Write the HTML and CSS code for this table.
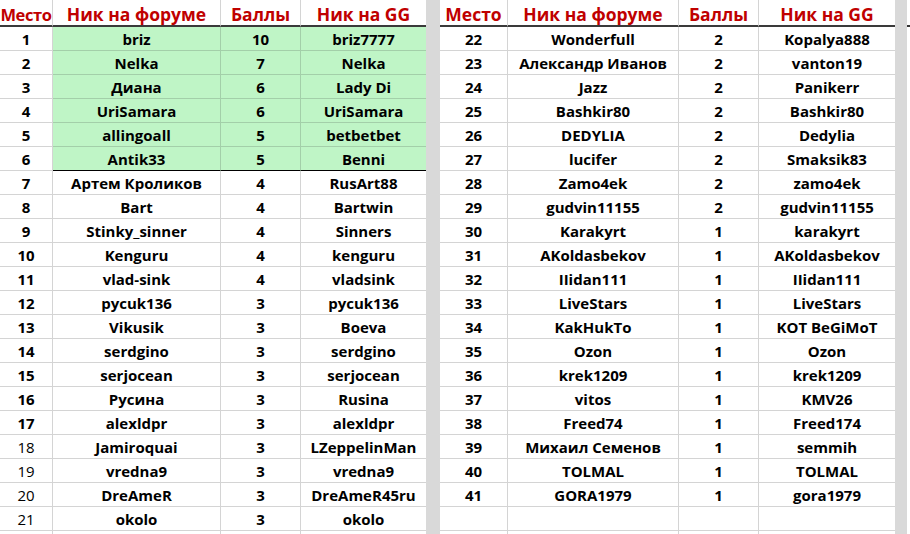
FILE: index.html
```html
<!DOCTYPE html>
<html lang="ru">
<head>
<meta charset="utf-8">
<link rel="stylesheet" href="styles.css">
</head>
<body>
<div class="sheet">
  <div class="tbl tbl-left" id="left"></div>
  <div class="gap gap-mid"></div>
  <div class="tbl tbl-right" id="right"></div>
  <div class="gap gap-end"></div>
  <div class="stub"><div class="stub-head"></div></div>
</div>
<script src="app.js"></script>
</body>
</html>
```
FILE: app.js
```js
const left = [
  [1,"briz",10,"briz7777"],[2,"Nelka",7,"Nelka"],[3,"Диана",6,"Lady Di"],
  [4,"UriSamara",6,"UriSamara"],[5,"allingoall",5,"betbetbet"],[6,"Antik33",5,"Benni"],
  [7,"Артем Кроликов",4,"RusArt88"],[8,"Bart",4,"Bartwin"],[9,"Stinky_sinner",4,"Sinners"],
  [10,"Kenguru",4,"kenguru"],[11,"vlad-sink",4,"vladsink"],[12,"pycuk136",3,"pycuk136"],
  [13,"Vikusik",3,"Boeva"],[14,"serdgino",3,"serdgino"],[15,"serjocean",3,"serjocean"],
  [16,"Русина",3,"Rusina"],[17,"alexldpr",3,"alexldpr"],[18,"Jamiroquai",3,"LZeppelinMan"],
  [19,"vredna9",3,"vredna9"],[20,"DreAmeR",3,"DreAmeR45ru"],[21,"okolo",3,"okolo"]
];
const right = [
  [22,"Wonderfull",2,"Kopalya888"],[23,"Александр Иванов",2,"vanton19"],[24,"Jazz",2,"Panikerr"],
  [25,"Bashkir80",2,"Bashkir80"],[26,"DEDYLIA",2,"Dedylia"],[27,"lucifer",2,"Smaksik83"],
  [28,"Zamo4ek",2,"zamo4ek"],[29,"gudvin11155",2,"gudvin11155"],[30,"Karakyrt",1,"karakyrt"],
  [31,"AKoldasbekov",1,"AKoldasbekov"],[32,"IIidan111",1,"IIidan111"],[33,"LiveStars",1,"LiveStars"],
  [34,"KakHukTo",1,"KOT BeGiMoT"],[35,"Ozon",1,"Ozon"],[36,"krek1209",1,"krek1209"],
  [37,"vitos",1,"KMV26"],[38,"Freed74",1,"Freed174"],[39,"Михаил Семенов",1,"semmih"],
  [40,"TOLMAL",1,"TOLMAL"],[41,"GORA1979",1,"gora1979"],["","","",""],["","","",""]
];
left.push(["","","",""]);
const heads = ["Место","Ник на форуме","Баллы","Ник на GG"];

function build(el, rows, isLeft) {
  let html = "";
  heads.forEach((h, i) => {
    let cls = "c head";
    if (i === 0) cls += " h0";
    if (i === 3) cls += " last";
    html += `<div class="${cls}">${h}</div>`;
  });
  rows.forEach((r, ri) => {
    const green = isLeft && ri < 6;
    const edge = isLeft && ri === 5;
    const thinNum = isLeft && r[0] >= 18;
    r.forEach((v, i) => {
      let cls = "c";
      if (i === 3) cls += " last";
      if (green && i > 0) cls += " green";
      if (edge && i > 0) cls += " edge";
      if (i === 0 && thinNum) cls += " thin";
      html += `<div class="${cls}">${v}</div>`;
    });
  });
  el.innerHTML = html;
}
build(document.getElementById("left"), left, true);
build(document.getElementById("right"), right, false);
```
FILE: styles.css
```css
html, body {
  margin: 0;
  padding: 0;
  background: #fff;
  width: 910px;
  height: 534px;
  overflow: hidden;
}
.sheet {
  display: flex;
  align-items: flex-start;
  height: 534px;
  overflow: hidden;
  font-family: "Open Sans", "Liberation Sans", sans-serif;
}
.tbl {
  display: grid;
  flex: none;
}
.tbl-left {
  width: 426px;
  grid-template-columns: 53px 168px 80px 125px;
}
.tbl-right {
  width: 455px;
  grid-template-columns: 68px 171px 80px 136px;
}
.gap {
  flex: none;
  align-self: stretch;
  background: #d9d9d9;
}
.gap-mid { width: 14px; }
.gap-end { width: 12px; }
.stub { flex: 1; }
.stub-head {
  height: 27px;
  box-sizing: border-box;
  border-bottom: 2px solid #333;
}
.c {
  box-sizing: border-box;
  height: 24px;
  border-bottom: 1px solid #d4d4d4;
  border-right: 1px solid #d4d4d4;
  display: flex;
  align-items: center;
  justify-content: center;
  font-size: 15px;
  font-weight: 700;
  color: #000;
  white-space: nowrap;
  overflow: hidden;
  padding-top: 1px;
}
.c.last { border-right: none; }
.c.head {
  height: 27px;
  border-bottom: 2px solid #3a3a3a;
  border-right: 1px solid #d4d4d4;
  color: #c00000;
  font-size: 17.5px;
  padding-top: 3px;
}
.tbl-left .c.head.h0 {
  font-size: 16.5px;
  letter-spacing: -0.4px;
}
.c.head.last { border-right: none; }
.c.thin { font-weight: 400; }
.c.green {
  background: #bff5c6;
  border-bottom-color: #a3cfa9;
  border-right-color: #a3cfa9;
}
.c.edge { border-bottom-color: #000; }
```
